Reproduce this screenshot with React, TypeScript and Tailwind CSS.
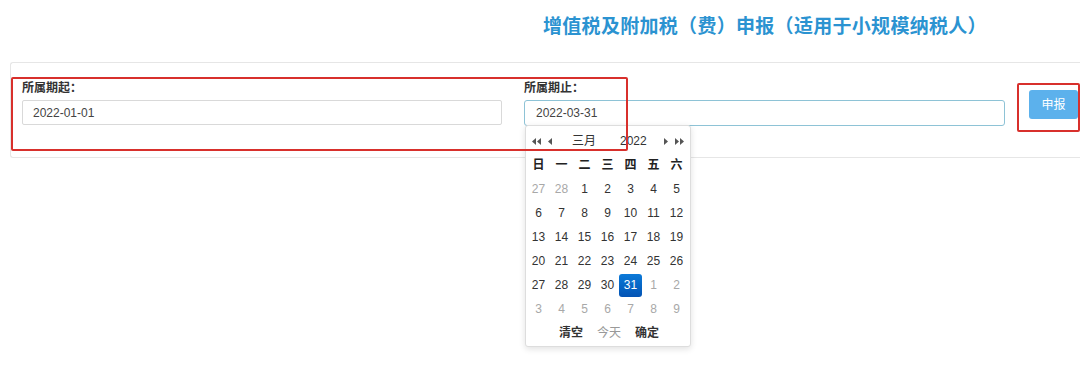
import React from "react";

const font = { fontFamily: '"Liberation Sans", "Noto Sans CJK SC", sans-serif' };

function Tri({ dir }: { dir: "l" | "r" }) {
  return (
    <svg width="4" height="7" viewBox="0 0 4 7">
      {dir === "l" ? <path d="M4 0 L0 3.5 L4 7 Z" fill="#555" /> : <path d="M0 0 L4 3.5 L0 7 Z" fill="#555" />}
    </svg>
  );
}

function Cal() {
  const rows: { d: number; muted?: boolean; sel?: boolean }[][] = [
    [{ d: 27, muted: true }, { d: 28, muted: true }, { d: 1 }, { d: 2 }, { d: 3 }, { d: 4 }, { d: 5 }],
    [6, 7, 8, 9, 10, 11, 12].map((d) => ({ d })),
    [13, 14, 15, 16, 17, 18, 19].map((d) => ({ d })),
    [20, 21, 22, 23, 24, 25, 26].map((d) => ({ d })),
    [{ d: 27 }, { d: 28 }, { d: 29 }, { d: 30 }, { d: 31, sel: true }, { d: 1, muted: true }, { d: 2, muted: true }],
    [3, 4, 5, 6, 7, 8, 9].map((d) => ({ d, muted: true })),
  ];
  const wk = ["日", "一", "二", "三", "四", "五", "六"];
  return (
    <div className="absolute left-[525px] top-[125px] w-[166px] h-[222px] bg-white border border-[#ddd] rounded-[3px] shadow-[0_2px_6px_rgba(0,0,0,0.12)] px-[1px] pt-[4px]" style={font}>
      <div className="flex items-center h-[22px] text-[12px] text-[#333]">
        <div className="flex items-center gap-[1px] ml-[5px]"><Tri dir="l" /><Tri dir="l" /></div>
        <div className="ml-[7px]"><Tri dir="l" /></div>
        <div className="ml-[20px]">三月</div>
        <div className="ml-[24px]">2022</div>
        <div className="ml-auto"><Tri dir="r" /></div>
        <div className="flex items-center gap-[1px] ml-[7px] mr-[5px]"><Tri dir="r" /><Tri dir="r" /></div>
      </div>
      <div className="grid grid-cols-7 w-[161px] mt-[1px]">
        {wk.map((w) => (
          <div key={w} className="h-[24px] flex items-center justify-center text-[12px] font-bold text-[#222]">{w}</div>
        ))}
        {rows.flat().map((c, i) => (
          <div key={i} className="h-[24px] flex items-center justify-center">
            {c.sel ? (
              <div className="w-[23px] h-[23px] rounded-[3px] bg-gradient-to-b from-[#0c7ad8] to-[#0453b4] text-white flex items-center justify-center text-[12px]">{c.d}</div>
            ) : (
              <span className={`text-[12px] ${c.muted ? "text-[#a8a8a8]" : "text-[#333]"}`}>{c.d}</span>
            )}
          </div>
        ))}
      </div>
      <div className="flex items-center h-[24px] text-[12px]">
        <span className="ml-[32px] font-bold text-[#333]">清空</span>
        <span className="ml-[14px] text-[#999]">今天</span>
        <span className="ml-[14px] font-bold text-[#333]">确定</span>
      </div>
    </div>
  );
}

export default function App() {
  return (
    <div className="relative w-[1080px] h-[371px] bg-white overflow-hidden" style={font}>
      <div className="pt-[15px] pl-[543px] text-[19px] leading-[24px] font-bold text-[#2b93d1] tracking-[0.3px] whitespace-nowrap">
        增值税及附加税（费）申报（适用于小规模纳税人）
      </div>
      <div className="mt-[23px] ml-[10px] h-[96px] border-l border-t border-b border-[#e6e6e6] rounded-l-[3px] flex items-start pl-[11px] pt-[18px]">
        <div className="w-[480px] flex flex-col">
          <div className="text-[12px] font-bold text-[#333] leading-[14px]">所属期起：</div>
          <div className="mt-[5px] h-[25px] border border-[#d9d9d9] rounded-[2px] flex items-center pl-[10px] text-[12px] text-[#444]">2022-01-01</div>
        </div>
        <div className="w-[481px] ml-[22px] flex flex-col">
          <div className="text-[12px] font-bold text-[#333] leading-[14px]">所属期止：</div>
          <div className="mt-[5px] h-[26px] border border-[#8ec3d6] rounded-[3px] flex items-center pl-[11px] text-[12px] text-[#444]">2022-03-31</div>
        </div>
        <div className="ml-[24px] mt-[9px] w-[49px] h-[29px] rounded-[3px] bg-[#5cb1ec] text-white text-[12px] flex items-center justify-center">申报</div>
      </div>
      <Cal />
      <div className="absolute left-[11px] top-[77px] w-[617px] h-[74px] border-2 border-[#d8302c] rounded-[2px] pointer-events-none" />
      <div className="absolute left-[1017px] top-[83px] w-[63px] h-[49px] border-2 border-[#d8302c] rounded-[2px] pointer-events-none" />
    </div>
  );
}
